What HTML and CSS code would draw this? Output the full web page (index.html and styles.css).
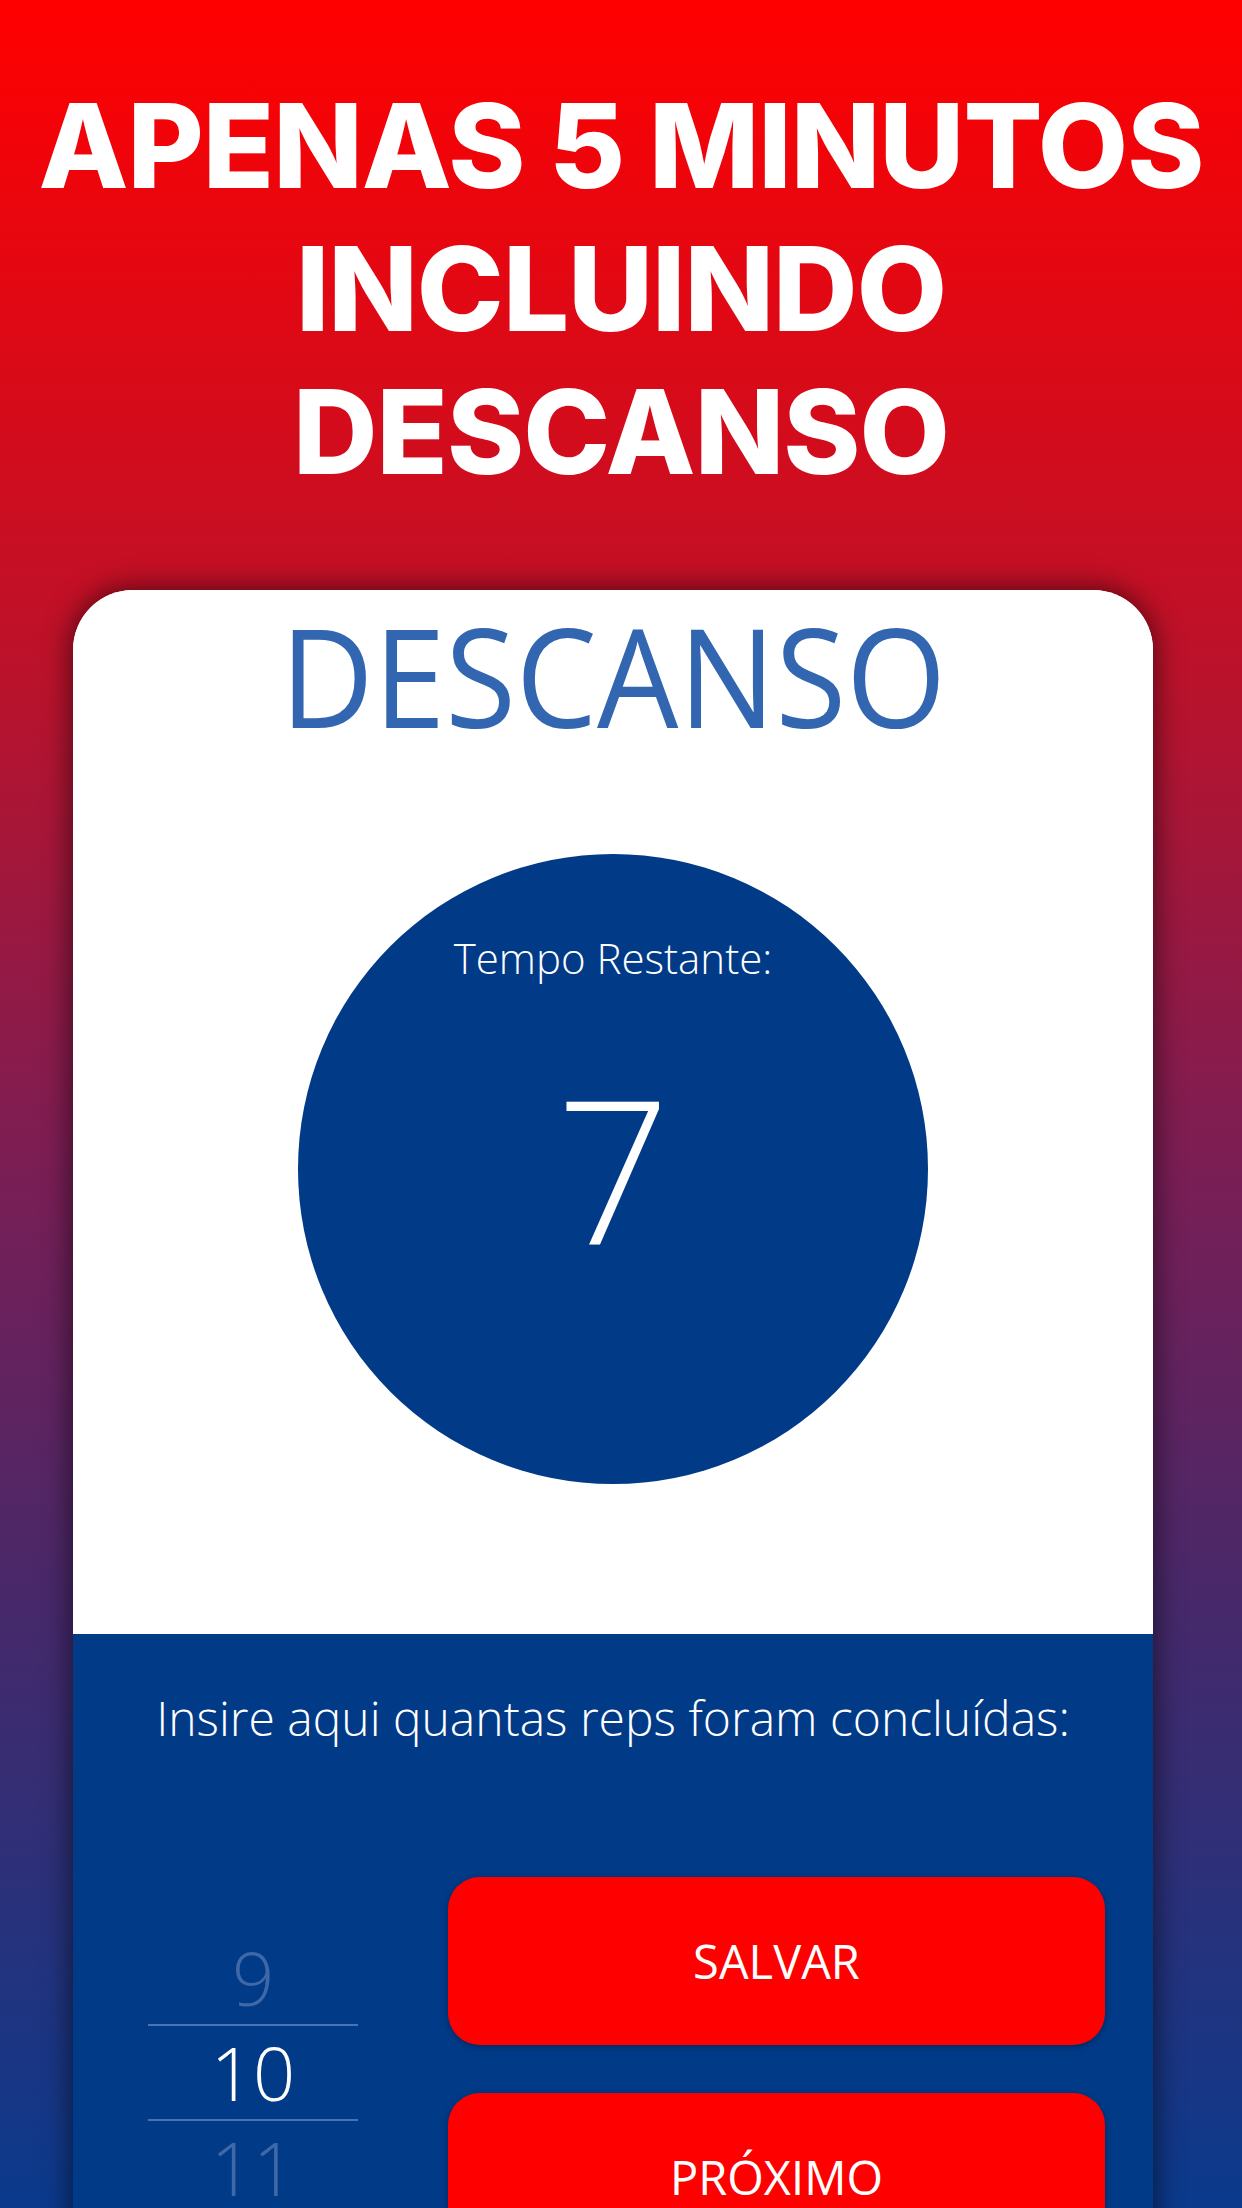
FILE: index.html
```html
<!DOCTYPE html>
<html lang="pt">
<head>
<meta charset="utf-8">
<title>Descanso</title>
<link rel="stylesheet" href="styles.css">
</head>
<body>
<div class="page">
  <h1 class="headline">APENAS 5 MINUTOS<br>INCLUINDO<br>DESCANSO</h1>
  <div class="card">
    <div class="card-top">
      <div class="title">DESCANSO</div>
      <div class="timer">
        <div class="timer-label">Tempo Restante:</div>
        <div class="timer-value">7</div>
      </div>
    </div>
    <div class="card-bottom">
      <div class="prompt">Insire aqui quantas reps foram concluídas:</div>
      <div class="controls">
        <div class="picker">
          <div class="pick faded">9</div>
          <div class="pick-line"></div>
          <div class="pick current">10</div>
          <div class="pick-line"></div>
          <div class="pick faded">11</div>
        </div>
        <div class="buttons">
          <div class="btn">SALVAR</div>
          <div class="btn">PRÓXIMO</div>
        </div>
      </div>
    </div>
  </div>
</div>
</body>
</html>
```
FILE: styles.css
```css
html, body {
  margin: 0;
  padding: 0;
}
body {
  width: 1242px;
  height: 2208px;
  overflow: hidden;
  background: linear-gradient(to bottom, #ff0000 0px, #b8132d 700px, #7a1e55 1170px, #45296b 1620px, #0b3a8c 2208px);
  font-family: "Open Sans", "Liberation Sans", sans-serif;
}
.page {
  display: flex;
  flex-direction: column;
  align-items: center;
  height: 2208px;
}
.headline {
  margin: 74px 0 0 0;
  font-family: Inter, "Liberation Sans", sans-serif;
  font-weight: 800;
  font-size: 117px;
  line-height: 143px;
  color: #ffffff;
  text-align: center;
  letter-spacing: -1px;
}
.card {
  margin-top: 87px;
  margin-left: 73px;
  align-self: flex-start;
  width: 1080px;
  flex: 0 0 auto;
  height: 1800px;
  border-radius: 60px 60px 0 0;
  overflow: hidden;
  box-shadow: 0 0 26px 4px rgba(0, 0, 0, 0.5);
  background: #ffffff;
}
.card-top {
  background: #ffffff;
  padding-top: 2px;
  height: 1044px;
  box-sizing: border-box;
  display: flex;
  flex-direction: column;
  align-items: center;
}
.title {
  font-size: 137px;
  line-height: 167px;
  font-weight: 400;
  color: #3366b0;
  transform: scaleX(0.94);
}
.timer {
  margin-top: 95px;
  width: 630px;
  height: 630px;
  border-radius: 50%;
  background: #013a87;
  display: flex;
  flex-direction: column;
  align-items: center;
  color: #ffffff;
}
.timer-label {
  margin-top: 83px;
  font-size: 42px;
  line-height: 42px;
  font-weight: 300;
}
.timer-value {
  margin-top: 88px;
  font-size: 200px;
  line-height: 200px;
  font-weight: 300;
}
.card-bottom {
  background: #013a87;
  height: 756px;
  padding-top: 60px;
  box-sizing: border-box;
  color: #ffffff;
}
.prompt {
  font-size: 48px;
  line-height: 48px;
  font-weight: 300;
  text-align: center;
}
.controls {
  margin-top: 135px;
  display: flex;
  align-items: flex-start;
  padding-left: 75px;
  padding-right: 48px;
  gap: 90px;
}
.picker {
  width: 210px;
  margin-top: 54px;
  display: flex;
  flex-direction: column;
}
.pick {
  height: 93px;
  font-size: 74px;
  line-height: 93px;
  font-weight: 300;
  text-align: center;
}
.pick.faded {
  color: #3e68a7;
}
.pick.current {
  color: #ffffff;
}
.pick-line {
  height: 2px;
  background: #4a73b2;
}
.buttons {
  flex: 1;
  display: flex;
  flex-direction: column;
  gap: 48px;
}
.btn {
  height: 168px;
  border-radius: 32px;
  background: #ff0000;
  box-shadow: 0 2px 6px rgba(0, 0, 0, 0.3);
  display: flex;
  align-items: center;
  justify-content: center;
  font-size: 47px;
  font-weight: 400;
  color: #ffffff;
}
```
